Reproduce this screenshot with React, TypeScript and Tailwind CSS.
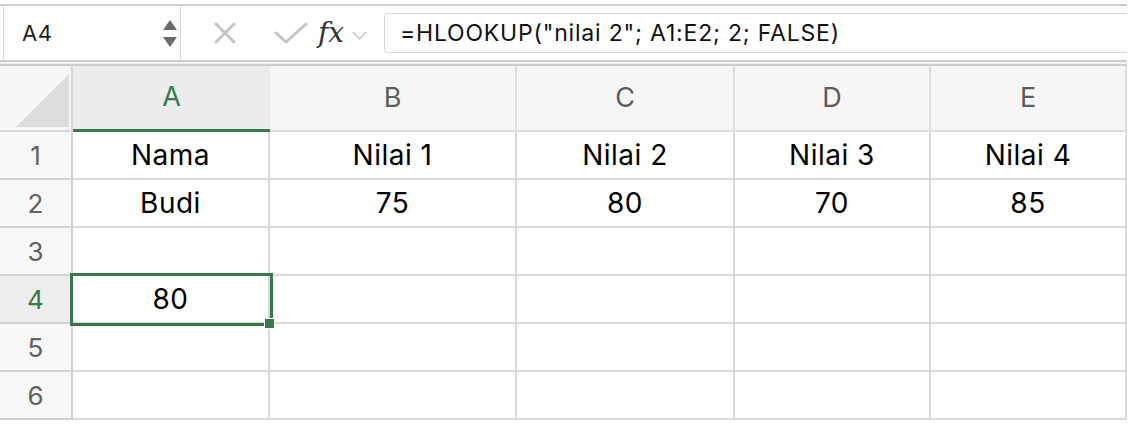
import React from 'react';

const columns = [
  { key: 'A', width: 'w-[197px]' },
  { key: 'B', width: 'w-[247px]' },
  { key: 'C', width: 'w-[218px]' },
  { key: 'D', width: 'w-[196px]' },
  { key: 'E', width: 'w-[196px]' },
];

const rows: string[][] = [
  ['Nama', 'Nilai 1', 'Nilai 2', 'Nilai 3', 'Nilai 4'],
  ['Budi', '75', '80', '70', '85'],
  ['', '', '', '', ''],
  ['80', '', '', '', ''],
  ['', '', '', '', ''],
  ['', '', '', '', ''],
];

const FormulaBar: React.FC = () => (
  <div className="w-[1127px] pt-[4px]">
    <div className="flex h-[56px] items-stretch border-t-2 border-[#cfcfcf] bg-white">
      {/* name box */}
      <div className="ml-[3px] flex w-[178px] items-center justify-between border-x border-[#d6d6d6] pl-[18px] pr-[3px]">
        <span className="font-['Inter'] text-[22px] tracking-[0.5px] text-[#1f1f1f]">A4</span>
        <div className="flex flex-col gap-[7px]">
          <svg width="14" height="10" viewBox="0 0 14 10"><path d="M7 0 L14 10 L0 10 Z" fill="#6b6b6b" /></svg>
          <svg width="14" height="10" viewBox="0 0 14 10"><path d="M0 0 L14 0 L7 10 Z" fill="#6b6b6b" /></svg>
        </div>
      </div>
      {/* cancel / enter / fx */}
      <div className="flex w-[200px] items-center">
        <svg className="ml-[33px]" width="22" height="22" viewBox="0 0 22 22">
          <path d="M2 2 L20 20 M20 2 L2 20" stroke="#c4c4c4" strokeWidth="3" strokeLinecap="round" />
        </svg>
        <svg className="ml-[38px]" width="34" height="22" viewBox="0 0 34 22">
          <path d="M2 11 L12 20 L32 2" stroke="#c4c4c4" strokeWidth="3" fill="none" strokeLinecap="round" strokeLinejoin="round" />
        </svg>
        <span className="ml-[10px] font-['DejaVu_Serif'] text-[28px] italic leading-none text-[#333]">fx</span>
        <svg className="ml-[8px] mt-[4px]" width="15" height="9" viewBox="0 0 15 9">
          <path d="M1 1 L7.5 8 L14 1" stroke="#c4c4c4" strokeWidth="1.5" fill="none" />
        </svg>
      </div>
      {/* formula input */}
      <div className="ml-[3px] flex flex-1 items-center py-[7px]">
        <div className="flex h-full w-full items-center rounded-l-[4px] border border-r-0 border-[#d9d9d9] pl-[15px]">
          <span className="font-['Inter'] text-[23px] tracking-[0.8px] text-[#111]">
            =HLOOKUP("nilai 2"; A1:E2; 2; FALSE)
          </span>
        </div>
      </div>
    </div>
    <div className="h-[2px] bg-[#cdcdcd]" />
    <div className="h-[2px] bg-[#f2f2f2]" />
    <div className="h-[2px] bg-[#cdcdcd]" />
  </div>
);

const App: React.FC = () => {
  return (
    <div className="h-[424px] w-[1148px] overflow-hidden bg-white">
      <FormulaBar />
      <div className="w-[1127px]">
        {/* column header row */}
        <div className="flex h-[66px]">
          <div className="flex w-[73px] items-end border-r-2 border-b-2 border-[#d8d8d8] bg-[#f6f6f6] pb-[3px] pl-[16px]">
            <svg width="53" height="53" viewBox="0 0 53 53"><path d="M53 0 L53 53 L0 53 Z" fill="#dcdcdc" /></svg>
          </div>
          {columns.map(c => (
            <div
              key={c.key}
              className={`${c.width} flex items-center justify-center font-['Inter'] text-[27px] ${
                c.key === 'A'
                  ? 'border-b-[3px] border-[#37794a] bg-[#ececec] text-[#37794a]'
                  : 'border-b-2 border-r-2 border-[#dedede] bg-[#f6f6f6] text-[#5c5c5c]'
              }`}
            >
              {c.key}
            </div>
          ))}
        </div>
        {/* data rows */}
        {rows.map((row, i) => (
          <div key={i} className="flex h-[48px]">
            <div
              className={`flex w-[73px] items-center justify-center border-r-2 border-b-2 border-[#d2d2d2] font-['Inter'] text-[26px] ${
                i === 3 ? 'bg-[#ededed] text-[#37794a]' : 'bg-[#f8f8f8] text-[#616161]'
              }`}
            >
              {i + 1}
            </div>
            {row.map((val, j) => (
              <div
                key={j}
                className={`${columns[j].width} flex items-center justify-center border-r-2 border-b-2 border-[#dadada] font-['Inter'] text-[28px] tracking-[0.5px] text-black ${
                  i === 3 && j === 0 ? 'relative' : ''
                }`}
              >
                {val}
                {i === 3 && j === 0 && (
                  <>
                    <div className="absolute -top-[3px] -left-[3px] z-10 h-[53px] w-[203px] border-[3px] border-[#37794a]" />
                    <div className="absolute -bottom-[7px] -right-[7px] z-20 h-[11px] w-[11px] border border-white bg-[#37794a]" />
                  </>
                )}
              </div>
            ))}
          </div>
        ))}
      </div>
    </div>
  );
};

export default App;
